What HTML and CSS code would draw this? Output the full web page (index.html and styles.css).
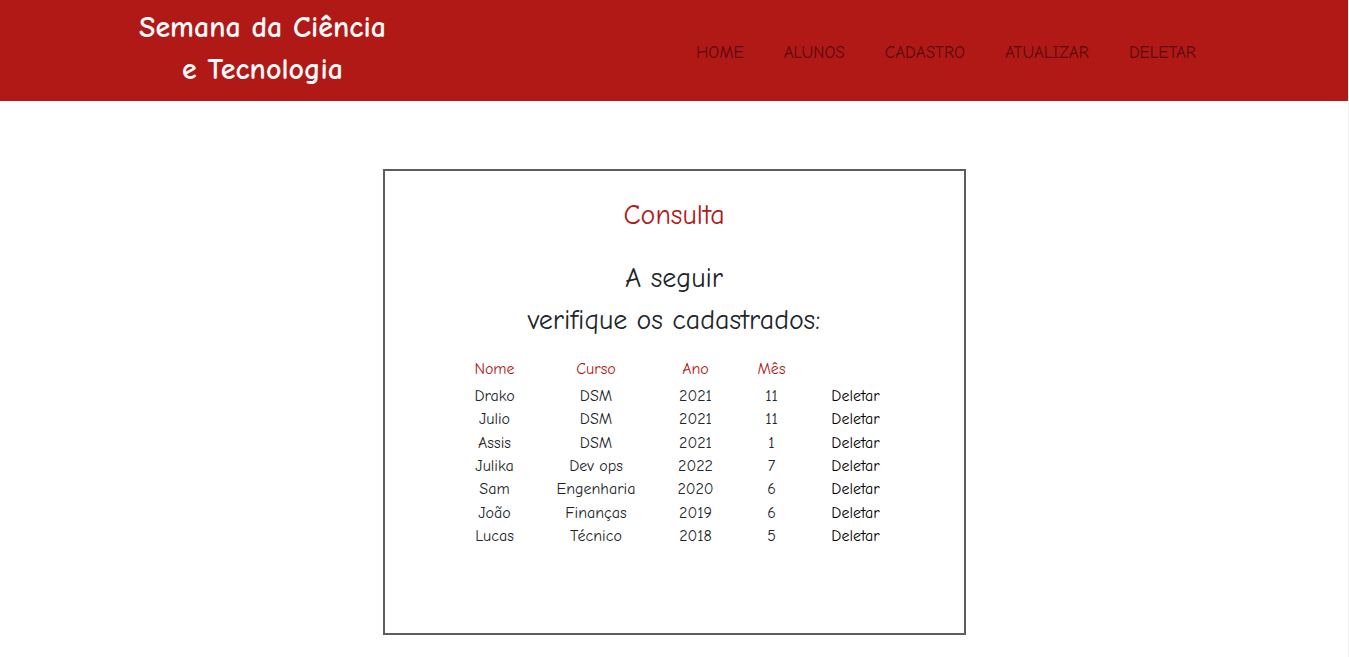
FILE: index.html
```html
<!DOCTYPE html>
<html lang="pt-BR">
<head>
<meta charset="utf-8">
<title>Semana da Ciência e Tecnologia</title>
<link rel="stylesheet" href="styles.css">
</head>
<body>
<header class="header">
  <h1 class="brand">Semana da Ciência<br>e Tecnologia</h1>
  <nav class="nav">
    <a href="#">HOME</a>
    <a href="#">ALUNOS</a>
    <a href="#">CADASTRO</a>
    <a href="#">ATUALIZAR</a>
    <a href="#">DELETAR</a>
  </nav>
</header>
<main class="card">
  <h2 class="title">Consulta</h2>
  <p class="lead">A seguir<br>verifique os cadastrados:</p>
  <table class="list">
    <colgroup><col class="c-nome"><col class="c-curso"><col class="c-ano"><col class="c-mes"><col class="c-acao"></colgroup>
    <thead><tr><th>Nome</th><th>Curso</th><th>Ano</th><th>Mês</th><td></td></tr></thead>
    <tbody>
      <tr><td>Drako</td><td>DSM</td><td>2021</td><td>11</td><td><a href="#">Deletar</a></td></tr>
      <tr><td>Julio</td><td>DSM</td><td>2021</td><td>11</td><td><a href="#">Deletar</a></td></tr>
      <tr><td>Assis</td><td>DSM</td><td>2021</td><td>1</td><td><a href="#">Deletar</a></td></tr>
      <tr><td>Julika</td><td>Dev ops</td><td>2022</td><td>7</td><td><a href="#">Deletar</a></td></tr>
      <tr><td>Sam</td><td>Engenharia</td><td>2020</td><td>6</td><td><a href="#">Deletar</a></td></tr>
      <tr><td>João</td><td>Finanças</td><td>2019</td><td>6</td><td><a href="#">Deletar</a></td></tr>
      <tr><td>Lucas</td><td>Técnico</td><td>2018</td><td>5</td><td><a href="#">Deletar</a></td></tr>
    </tbody>
  </table>
</main>
</body>
</html>
```
FILE: styles.css
```css
* { box-sizing: border-box; }
html { background: #f1f1f1; }
body {
  margin: 0 1px 0 0;
  min-height: 100vh;
  background: #fff;
  color: #212529;
  font-family: "Comic Sans MS", "Comic Neue", "Open Sans", sans-serif;
  font-size: 16px;
  font-variant-ligatures: none;
  display: flow-root;
}
a { color: inherit; text-decoration: none; }
.header {
  display: flex;
  justify-content: space-between;
  align-items: center;
  background: #b11917;
  padding: 7px 152px 10px 139px;
}
.brand {
  margin: 0;
  color: #f8f9fa;
  font-size: 30px;
  line-height: 42px;
  font-weight: 700;
  text-align: center;
  white-space: nowrap;
}
.nav { display: flex; gap: 40px; padding-top: 8px; color: #58090b; font-size: 17px; line-height: 24px; }
.card {
  width: 583px;
  max-width: 100%;
  margin: 68px auto 22px;
  padding: 23px 24px 85px;
  border: 2px solid #5d5d5d;
  text-align: center;
}
.title, .lead { margin: 0; font-size: 28px; line-height: 42px; font-weight: 400; }
.title { color: #b11917; }
.lead { margin-top: 21px; }
.list {
  table-layout: fixed;
  width: 451px;
  height: 190px;
  margin: 17px auto 0 44px;
  border-collapse: collapse;
  line-height: 23px;
}
.list th, .list td { padding: 0; font-weight: 400; }
.list th { color: #b11917; padding-bottom: 4px; }
.list a { color: #000; }
.c-nome { width: 84px; }
.c-curso { width: 119px; }
.c-ano { width: 80px; }
.c-mes { width: 72px; }
.c-acao { width: 96px; }
```
